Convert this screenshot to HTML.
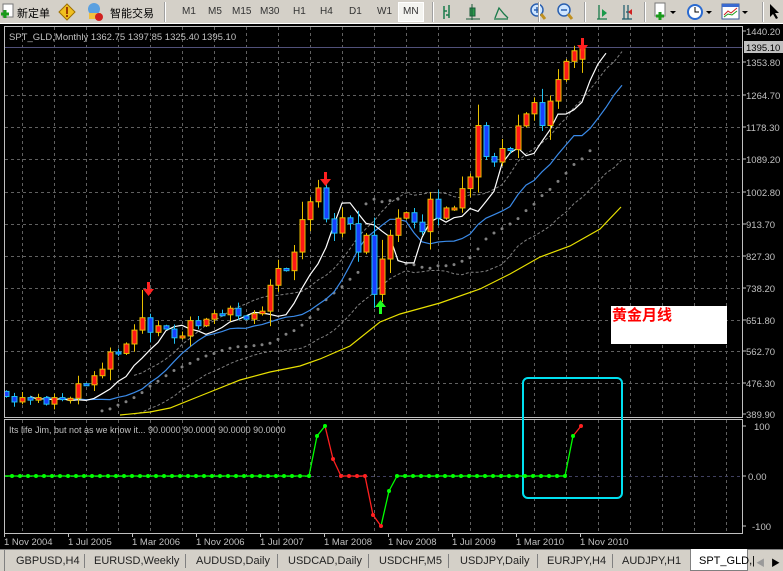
<!DOCTYPE html>
<html><head><meta charset="utf-8">
<style>
*{margin:0;padding:0;box-sizing:border-box}
body{width:783px;height:571px;overflow:hidden;background:#d4d0c8;font-family:"Liberation Sans","Noto Sans CJK SC",sans-serif;position:relative}
#tb{position:absolute;left:0;top:0;width:783px;height:24px;background:#d4d0c8;border-bottom:1px solid #fff;font-size:11px;color:#000}
#tb span{position:absolute;top:5px}
.tf{position:absolute;top:4px;font-size:10px;color:#333}
.sep{position:absolute;top:2px;width:2px;height:20px;border-left:1px solid #a0a0a0;border-right:1px solid #fff}
#tabs{position:absolute;left:0;top:549px;width:783px;height:22px;background:#d4d0c8;border-top:1px solid #808080;font-size:11px}
#tabs span{position:absolute;top:5px;color:#222}
.tsep{position:absolute;top:4px;width:1px;height:14px;background:#808080}
</style></head><body>
<div id="tb">
<svg style="position:absolute;left:0;top:3px" width="16" height="18"><rect x="3" y="1" width="10" height="13" fill="#fff" stroke="#777"/><path d="M1 11h8M5 7v8" stroke="#1a9a1a" stroke-width="3"/></svg>
<span style="left:17px">新定单</span>
<svg style="position:absolute;left:58px;top:3px" width="18" height="18"><path d="M9 1L17 9L9 17L1 9Z" fill="#f0c020" stroke="#a07000"/><rect x="8" y="4" width="2" height="7" fill="#a04000"/><rect x="8" y="12" width="2" height="2" fill="#a04000"/></svg>
<svg style="position:absolute;left:85px;top:2px" width="20" height="20"><circle cx="9" cy="7" r="6" fill="#5aa0e0"/><rect x="4" y="11" width="12" height="6" fill="#f0c040"/><circle cx="14" cy="15" r="4" fill="#d02020"/></svg>
<span style="left:110px">智能交易</span>
<div class="sep" style="left:164px"></div>
<span class="tf" style="left:182px;top:6px">M1</span><span class="tf" style="left:208px;top:6px">M5</span><span class="tf" style="left:232px;top:6px">M15</span><span class="tf" style="left:260px;top:6px">M30</span><span class="tf" style="left:293px;top:6px">H1</span><span class="tf" style="left:320px;top:6px">H4</span><span class="tf" style="left:349px;top:6px">D1</span><span class="tf" style="left:377px;top:6px">W1</span>
<div style="position:absolute;left:398px;top:2px;width:26px;height:20px;background:#f4f4f0;border:1px solid #fff"></div><span class="tf" style="left:403px;top:6px">MN</span>
<div class="sep" style="left:432px"></div>
<svg style="position:absolute;left:440px;top:3px" width="200" height="18">
<path d="M4 3v13M4 8h3M9 2v13M6 12h3" stroke="#1a7a4a" stroke-width="1.5" fill="none"/>
<rect x="30" y="5" width="5" height="8" fill="#2a9a4a" stroke="#1a5a3a"/><path d="M32 1v16M26 16h14" stroke="#1a5a3a"/>
<path d="M55 15l4-10 5 6 4 4M54 16h14" stroke="#1a7a4a" stroke-width="1.3" fill="none"/>
<circle cx="97" cy="7" r="6" fill="#cfe6ff" stroke="#2a60b0" stroke-width="1.5"/><path d="M94 7h6M97 4v6" stroke="#2a60b0" stroke-width="1.5"/><path d="M101 11l4 5" stroke="#c09020" stroke-width="3"/>
<circle cx="124" cy="7" r="6" fill="#cfe6ff" stroke="#2a60b0" stroke-width="1.5"/><path d="M121 7h6" stroke="#2a60b0" stroke-width="1.5"/><path d="M128 11l4 5" stroke="#c09020" stroke-width="3"/>
<path d="M159 2v14M157 16h10" stroke="#1a7a4a" stroke-width="1.3"/><path d="M162 6l5 4-5 4z" fill="#1a9a4a"/>
<path d="M184 2v14M188 2v14M182 16h10M186 9h6" stroke="#1a5a6a" stroke-width="1.2"/><path d="M188 9l4-3v6z" fill="#d02020"/>
</svg>
<div class="sep" style="left:538px"></div><div class="sep" style="left:584px"></div><div class="sep" style="left:644px"></div>
<svg style="position:absolute;left:652px;top:2px" width="130" height="20">
<rect x="3" y="1" width="10" height="13" fill="#fff" stroke="#777"/><path d="M4 14h8M8 10v8" stroke="#1a9a1a" stroke-width="3"/><path d="M18 9l3 3 3-3z" fill="#000"/>
<circle cx="43" cy="10" r="8" fill="#2a6ad0"/><circle cx="43" cy="10" r="6" fill="#fff"/><path d="M43 5v5h4" stroke="#000" fill="none"/><path d="M54 9l3 3 3-3z" fill="#000"/>
<rect x="70" y="2" width="17" height="15" fill="#fff" stroke="#3a5a9a"/><rect x="70" y="2" width="17" height="3" fill="#3a6ad0"/><path d="M72 13l4-4 3 2 6-5" stroke="#d02020" fill="none"/><path d="M72 15l4-3 4 1 5-4" stroke="#1a9a1a" fill="none"/><path d="M90 9l3 3 3-3z" fill="#000"/>
<path d="M118 2v13l3-3 3 5 2-1-3-5h4z" fill="#000"/>
</svg>
<div class="sep" style="left:762px"></div>
</div>

<svg id="ch" style="position:absolute;left:0;top:24px" width="783" height="525"></svg>

<div id="tabs">
<div style="position:absolute;left:1px;top:0;width:4px;height:21px;border-right:1px solid #808080"></div>
<span style="left:16px">GBPUSD,H4</span><div class="tsep" style="left:84px"></div>
<span style="left:94px">EURUSD,Weekly</span><div class="tsep" style="left:185px"></div>
<span style="left:196px">AUDUSD,Daily</span><div class="tsep" style="left:277px"></div>
<span style="left:288px">USDCAD,Daily</span><div class="tsep" style="left:368px"></div>
<span style="left:379px">USDCHF,M5</span><div class="tsep" style="left:448px"></div>
<span style="left:460px">USDJPY,Daily</span><div class="tsep" style="left:537px"></div>
<span style="left:547px">EURJPY,H4</span><div class="tsep" style="left:612px"></div>
<span style="left:622px">AUDJPY,H1</span>
<div style="position:absolute;left:690px;top:-1px;width:58px;height:22px;background:#fff;border:1px solid #808080;border-top:none"></div>
<span style="left:699px;color:#000">SPT_GLD,|</span>
<span style="left:756px;color:#999;font-size:9px;top:6px">◀</span><span style="left:771px;color:#000;font-size:9px;top:6px">▶</span>
</div>

<script>
var closes=[438,423,435,428,435,417,435,430,433,473,470,495,513,560,556,582,620,654,614,632,623,599,604,646,632,650,665,662,680,659,650,665,672,743,789,783,834,923,972,1010,925,886,928,912,834,880,718,815,880,927,942,916,890,979,927,955,955,1008,1040,1181,1096,1081,1118,1115,1180,1213,1244,1181,1248,1307,1357,1386,1395.1];
var n=closes.length,O=[],H=[],L=[];
var prev=452;
for(var i=0;i<n;i++){var o=prev,c=closes[i];O.push(o);var r=Math.max(8,Math.abs(c-o)*0.35+8);H.push(Math.max(o,c)+r*((i*7)%5+1)/4);L.push(Math.min(o,c)-r*((i*3)%5+1)/4);prev=c;}
H[n-1]=1397.85;L[n-1]=1325.4;O[n-1]=1362.75;H[17]=730;H[39]=1032;L[46]=681;
function X(i){return 6+8*i}
function Y(p){return 7+(1440.2-p)*0.3647}
var s='';
s+='<rect x="0" y="0" width="783" height="525" fill="#000"/>';
s+='<rect x="4.5" y="2.5" width="738" height="391" fill="none" stroke="#c0c0c0"/>';
s+='<rect x="4.5" y="395.5" width="738" height="114" fill="none" stroke="#c0c0c0"/>';
var lbl=[[1440.20,7],[1353.80,38],[1264.70,71],[1178.30,103],[1089.20,135],[1002.80,168],[913.70,200],[827.30,232],[738.20,264],[651.80,296],[562.70,327],[476.30,359],[389.90,390]];
lbl.forEach(function(l){if(l[1]>10&&l[1]<390)s+='<line x1="5" x2="742" y1="'+(l[1]+.5)+'" y2="'+(l[1]+.5)+'" stroke="#606060" stroke-dasharray="3,3"/>';});
for(var gx=22;gx<742;gx+=32){s+='<line x1="'+(gx+.5)+'" x2="'+(gx+.5)+'" y1="3" y2="393" stroke="#606060" stroke-dasharray="3,3"/><line x1="'+(gx+.5)+'" x2="'+(gx+.5)+'" y1="396" y2="509" stroke="#606060" stroke-dasharray="3,3"/>';}
s+='<line x1="5" x2="742" y1="23.5" y2="23.5" stroke="#50507a"/>';
s+='<line x1="5" x2="742" y1="452.5" y2="452.5" stroke="#404060" stroke-dasharray="3,3"/>';
s+='<g font-family="Liberation Sans" font-size="9.5" fill="#c0c0c0">';
lbl.forEach(function(l){s+='<line x1="742" x2="746" y1="'+l[1]+'" y2="'+l[1]+'" stroke="#c0c0c0"/><text x="746" y="'+(l[1]+4)+'">'+l[0].toFixed(2)+'</text>';});
s+='<rect x="744" y="17" width="39" height="12" fill="#c0c0c0"/><text x="746" y="27" fill="#000">1395.10</text>';
[["100",402],["0.00",452],["-100",502]].forEach(function(l){s+='<line x1="742" x2="746" y1="'+l[1]+'" y2="'+l[1]+'" stroke="#c0c0c0"/><text x="'+(l[0]=="100"?754:(l[0]=="-100"?752:748))+'" y="'+(l[1]+4)+'">'+l[0]+'</text>';});
var d=["1 Nov 2004","1 Jul 2005","1 Mar 2006","1 Nov 2006","1 Jul 2007","1 Mar 2008","1 Nov 2008","1 Jul 2009","1 Mar 2010","1 Nov 2010"];
d.forEach(function(t,k){var x=4+64*k;s+='<line x1="'+(x+.5)+'" x2="'+(x+.5)+'" y1="509" y2="513" stroke="#c0c0c0"/><text x="'+x+'" y="521">'+t+'</text>';});
s+='<text x="9" y="16">SPT_GLD,Monthly  1362.75 1397.85 1325.40 1395.10</text>';
s+='<text x="9" y="409" font-size="9">Its life Jim, but not as we know it...  90.0000 90.0000 90.0000 90.0000</text>';
s+='</g>';
s+='<svg x="5" y="3" width="737" height="390"><g transform="translate(-5,-3)">';
function sma(p,sh,col){var pts=[];for(var i=0;i<n;i++){var m=Math.min(p,i+1),a=0;for(var k=0;k<m;k++)a+=closes[i-k];a/=m;pts.push(X(i+sh)+','+Y(a).toFixed(1));}s+='<polyline points="'+pts.join(' ')+'" fill="none" stroke="'+col+'" stroke-width="1.2"/>';}
(function(){var up=[],dn=[];for(var i=11;i<n;i++){var a=0;for(var k=0;k<12;k++)a+=closes[i-k];a/=12;up.push(X(i+5)+','+Y(a*1.12).toFixed(1));dn.push(X(i+5)+','+Y(a*0.88).toFixed(1));}
s+='<polyline points="'+up.join(' ')+'" fill="none" stroke="#808080" stroke-dasharray="3,2"/><polyline points="'+dn.join(' ')+'" fill="none" stroke="#808080" stroke-dasharray="3,2"/>';
for(var i=11;i<n;i++){var a=0;for(var k=0;k<12;k++)a+=closes[i-k];a/=12;var yy=Y(closes[i]>a?a*0.9:a*1.1);s+='<circle cx="'+X(i+1)+'" cy="'+yy.toFixed(1)+'" r="1.5" fill="#808080"/>';}})();
s+='<polyline points="120,391 150,388 170,384 200,372 240,356 270,348 300,342 320,335 350,322 380,298 400,290 440,279 480,265 510,250 540,233 570,222 600,205 621,183" fill="none" stroke="#e8e000" stroke-width="1.2"/>';
sma(8,5,'#3a8ae8');sma(3,3,'#ffffff');
for(var i=0;i<n;i++){var up=closes[i]>=O[i],x=X(i),wc=up?'#e8c000':'#20c0f0',fc=up?'#ff1818':'#1840ff';
var t=Y(Math.max(O[i],closes[i])),b=Y(Math.min(O[i],closes[i]));if(b-t<2)b=t+2;
s+='<line x1="'+(x+.5)+'" x2="'+(x+.5)+'" y1="'+Y(H[i])+'" y2="'+Y(L[i])+'" stroke="'+wc+'"/>';
s+='<rect x="'+(x-2)+'" y="'+t+'" width="5" height="'+(b-t)+'" fill="'+fc+'" stroke="'+wc+'"/>';}
s+='</g></svg>';
function dn(x,y,c){s+='<path d="M'+(x-1)+' '+y+'h3v7h4l-5.5 7-5.5-7h4z" fill="'+c+'"/>';}
function upA(x,y,c){s+='<path d="M'+(x+.5)+' '+y+'l5.5 7h-4v7h-3v-7h-4z" fill="'+c+'"/>';}
dn(148,258,'#ff2020');dn(325,148,'#ff2020');upA(380,276,'#20ff20');dn(582,14,'#ff2020');
s+='<rect x="611" y="282" width="116" height="38" fill="#fff"/><text x="612" y="296" font-family="Liberation Sans,Noto Sans CJK SC,sans-serif" font-size="15" font-weight="bold" fill="#ff0000">黄金月线</text>';
s+='<rect x="523" y="354" width="99" height="120" rx="5" fill="none" stroke="#00e0f0" stroke-width="2"/>';
var seq=[[309,0,'g'],[317,80,'g'],[325,100,'g'],[333,34,'r'],[341,0,'r'],[349,0,'r'],[357,0,'r'],[365,0,'r'],[373,-78,'r'],[381,-100,'r'],[389,-30,'g'],[397,0,'g']];
var pts=[];for(var x=12;x<=301;x+=8)pts.push([x,0,'g']);pts=pts.concat(seq);for(var x=405;x<=565;x+=8)pts.push([x,0,'g']);pts.push([573,80,'g']);pts.push([581,100,'r']);
function IY(v){return 452-v*0.5}
s+='<line x1="5" x2="12" y1="452" y2="452" stroke="#00ff00" stroke-width="1.5"/>';
for(var k=1;k<pts.length;k++){var c=pts[k][2]=='g'?'#00ff00':'#ff2020';s+='<line x1="'+pts[k-1][0]+'" y1="'+IY(pts[k-1][1])+'" x2="'+pts[k][0]+'" y2="'+IY(pts[k][1])+'" stroke="'+c+'" stroke-width="1.3"/>';}
pts.forEach(function(p){s+='<circle cx="'+p[0]+'" cy="'+IY(p[1])+'" r="2" fill="'+(p[2]=='g'?'#00ff00':'#ff2020')+'"/>';});
document.getElementById('ch').innerHTML=s;
</script>
</body></html>
